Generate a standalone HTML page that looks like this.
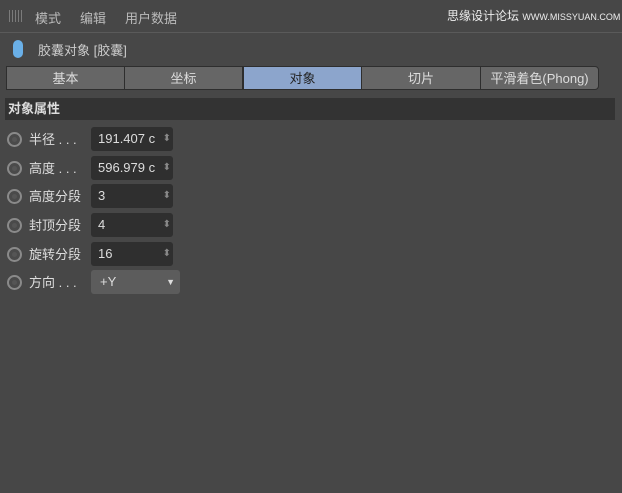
<!DOCTYPE html><html><head><meta charset="utf-8"><style>
body{margin:0;width:622px;height:493px;background:#474747;font-family:"Liberation Sans","Noto Sans CJK SC",sans-serif;color:#ccc;font-size:13px;position:relative;overflow:hidden}
.a{position:absolute}
.tab{position:absolute;top:66px;height:24px;line-height:24px;text-align:center;background:#666;border:1px solid #2e2e2e;box-sizing:border-box;color:#ddd}
.radio{position:absolute;left:7px;width:15px;height:15px;border-radius:50%;border:2px solid #8a8a8a;box-sizing:border-box;background:#4a4a4a}
.radio:after{content:"";position:absolute;left:3px;top:3px;width:5px;height:5px;border-radius:50%;background:#555}
.lbl{position:absolute;left:29px;color:#ddd;margin-top:2px}
.fld{position:absolute;left:91px;width:82px;height:24px;background:#2f2f2f;border-radius:3px;box-sizing:border-box;padding-left:7px;line-height:24px;color:#ddd}
.fld:after{content:"⬍";position:absolute;right:2px;top:0;font-size:10px;color:#888}
</style></head><body>
<div class="a" style="left:0;top:0;width:622px;height:32px;background:#474747;border-bottom:1px solid #5a5a5a"></div>
<div class="a" style="left:9px;top:10px;width:14px;height:12px;background:repeating-linear-gradient(90deg,#888 0 1px,transparent 1px 3px),#474747;opacity:.8"></div>
<div class="a" style="left:35px;top:8px;color:#bbb">模式</div>
<div class="a" style="left:80px;top:8px;color:#bbb">编辑</div>
<div class="a" style="left:125px;top:8px;color:#bbb">用户数据</div>
<div class="a" style="left:447px;top:7px;font-size:12px;color:#eee">思缘设计论坛 <span style="font-size:9px">WWW.MISSYUAN.COM</span></div>
<div class="a" style="left:13px;top:40px;width:10px;height:18px;border-radius:5px;background:#6ab0e8"></div>
<div class="a" style="left:38px;top:40px;color:#ccc">胶囊对象 [胶囊]</div>
<div class="tab" style="left:6px;width:119px">基本</div>
<div class="tab" style="left:124px;width:119px">坐标</div>
<div class="tab" style="left:243px;width:119px;background:#8ca5cc;color:#222">对象</div>
<div class="tab" style="left:361px;width:120px">切片</div>
<div class="tab" style="left:480px;width:119px;border-radius:0 4px 4px 0">平滑着色(Phong)</div>
<div class="a" style="left:5px;top:98px;width:607px;height:22px;background:#333;line-height:22px;font-weight:bold;padding-left:3px;color:#ddd">对象属性</div>
<div class="radio" style="top:132px"></div><div class="lbl" style="top:127px">半径 . . .</div><div class="fld" style="top:127px">191.407 c</div>
<div class="radio" style="top:161px"></div><div class="lbl" style="top:156px">高度 . . .</div><div class="fld" style="top:156px">596.979 c</div>
<div class="radio" style="top:189px"></div><div class="lbl" style="top:184px">高度分段</div><div class="fld" style="top:184px">3</div>
<div class="radio" style="top:218px"></div><div class="lbl" style="top:213px">封顶分段</div><div class="fld" style="top:213px">4</div>
<div class="radio" style="top:247px"></div><div class="lbl" style="top:242px">旋转分段</div><div class="fld" style="top:242px">16</div>
<div class="radio" style="top:275px"></div><div class="lbl" style="top:270px">方向 . . .</div>
<div class="a" style="left:91px;top:270px;width:89px;height:24px;background:#5c5c5c;border-radius:3px;line-height:24px;padding-left:9px;box-sizing:border-box;color:#ddd">+Y<span style="position:absolute;right:5px;top:0;font-size:9px">▼</span></div>
</body></html>
